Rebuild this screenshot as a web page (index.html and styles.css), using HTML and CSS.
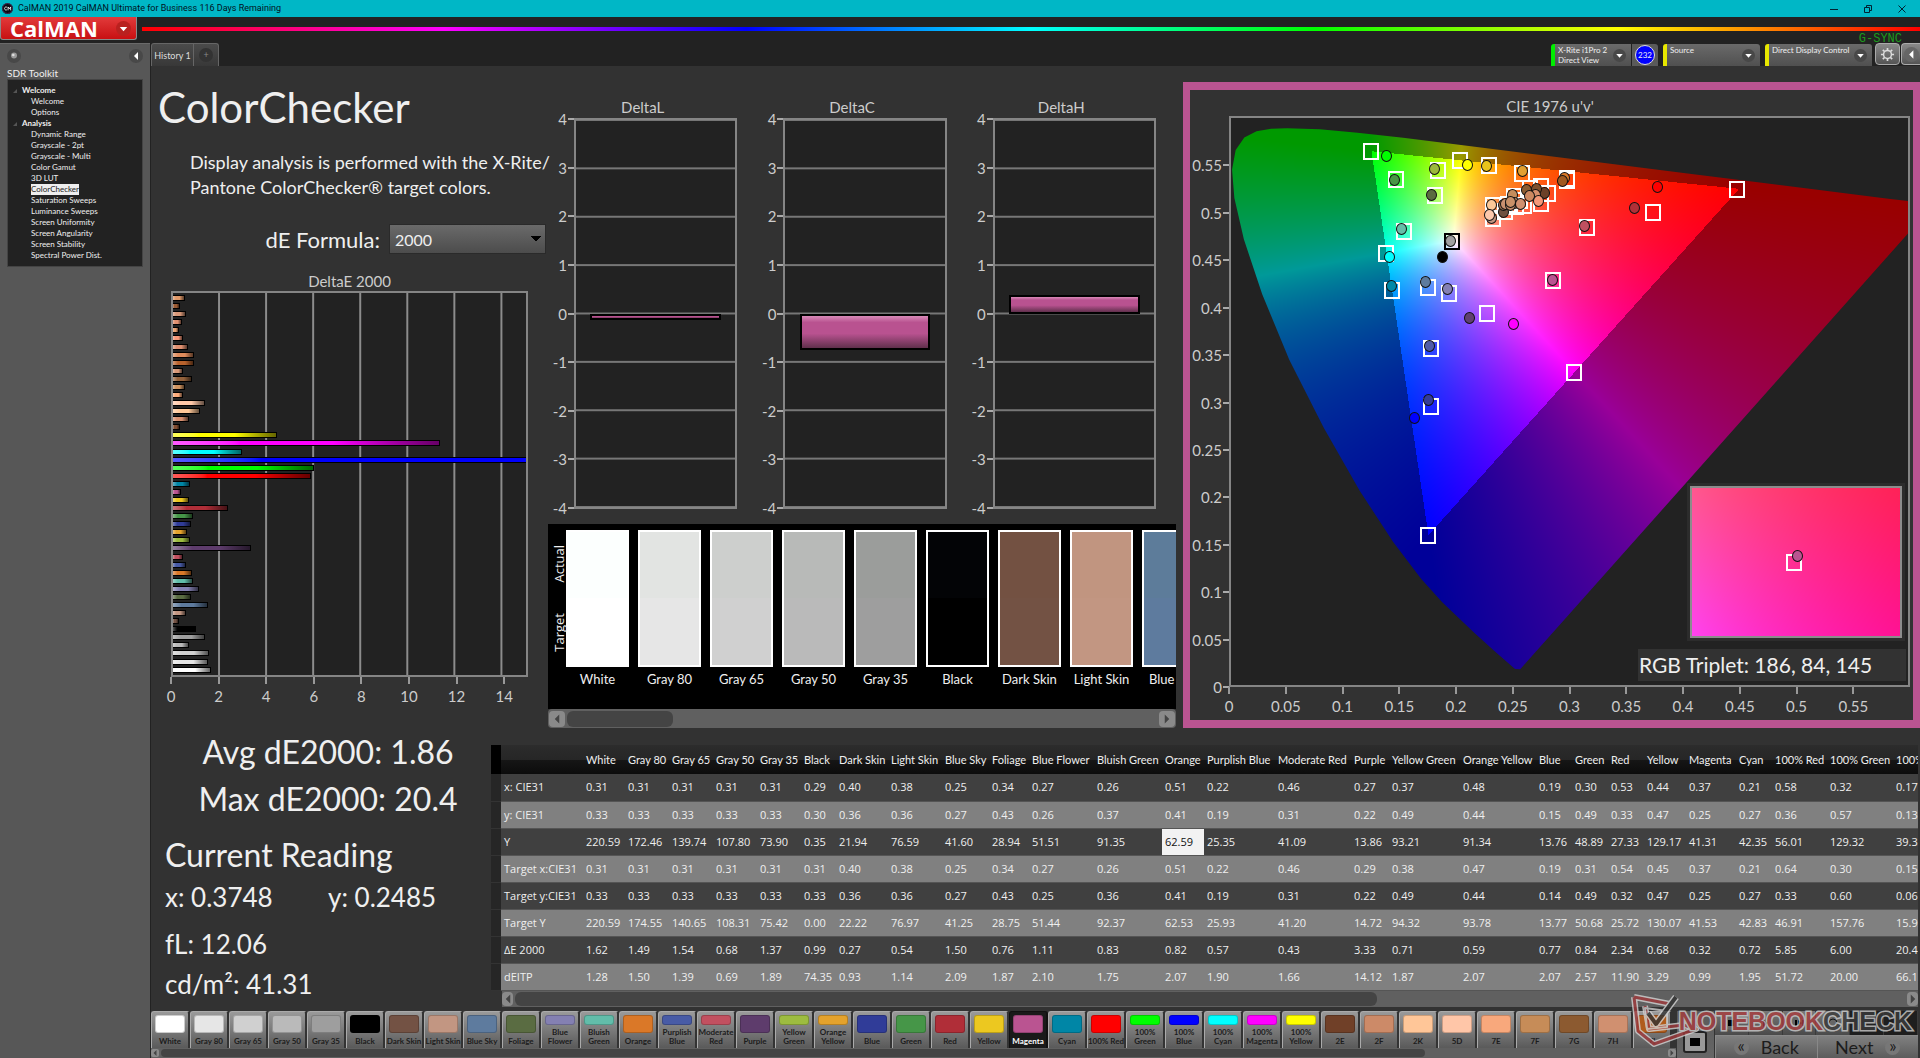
FILE: index.html
```
<!DOCTYPE html>
<html lang="en">
<head>
<meta charset="utf-8">
<title>CalMAN 2019 CalMAN Ultimate for Business</title>
<link rel="stylesheet" href="styles.css">
</head>
<body>
<div class="app">
  <header class="titlebar">
    <svg class="app-icon" viewBox="0 0 12 12"><circle cx="6" cy="6" r="6" fill="#0a0a14"/><circle cx="6" cy="6" r="5.4" fill="none" stroke="#5b3a6e" stroke-width=".8"/><path d="M5.4 4.6a1.7 1.7 0 1 0 0 2.8M6.6 8V4.3L8 6.4l1.4-2.1V8" fill="none" stroke="#fff" stroke-width=".9"/></svg>
    <span class="titlebar-text">CalMAN 2019 CalMAN Ultimate for Business 116 Days Remaining</span>
    <div class="window-buttons">
      <button type="button" aria-label="Minimize"><svg viewBox="0 0 8 8"><path d="M0 4.5h8" stroke="#023" fill="none"/></svg></button>
      <button type="button" aria-label="Restore"><svg viewBox="0 0 8 8"><path d="M.5 2.5h5v5h-5zM2.5 2.5v-2h5v5h-2" stroke="#023" fill="none"/></svg></button>
      <button type="button" aria-label="Close"><svg viewBox="0 0 8 8"><path d="M.5.5l7 7M7.500.5l-7 7" stroke="#023" fill="none"/></svg></button>
    </div>
  </header>

  <div class="brandbar">
    <button type="button" class="brand">CalMAN
      <svg class="brand-arrow" viewBox="0 0 14 14"><circle cx="7" cy="7" r="7" fill="#b9211f"/><path d="M3.500 5.500h7L7 9.500z" fill="#fff"/></svg>
    </button>
    <div class="rainbow"></div>
  </div>

  <div class="body">
    <aside class="sidebar">
      <div class="sidebar-tools">
        <button type="button" class="round" aria-label="Pin"><svg viewBox="0 0 14 14"><circle cx="7" cy="7" r="7" fill="#484848"/><circle cx="7" cy="6.500" r="3" fill="#9a9a9a"/><circle cx="6.300" cy="6" r="1.300" fill="#ddd"/></svg></button>
        <button type="button" class="round" aria-label="Collapse"><svg viewBox="0 0 14 14"><circle cx="7" cy="7" r="7" fill="#484848"/><path d="M9 3v8L5 7z" fill="#fff"/></svg></button>
      </div>
      <h2 class="sidebar-title">SDR Toolkit</h2>
      <nav class="tree">
        <h3>Welcome</h3>
        <a href="#">Welcome</a>
        <a href="#">Options</a>
        <h3>Analysis</h3>
        <a href="#">Dynamic Range</a>
        <a href="#">Grayscale - 2pt</a>
        <a href="#">Grayscale - Multi</a>
        <a href="#">Color Gamut</a>
        <a href="#">3D LUT</a>
        <a href="#" class="current">ColorChecker</a>
        <a href="#">Saturation Sweeps</a>
        <a href="#">Luminance Sweeps</a>
        <a href="#">Screen Uniformity</a>
        <a href="#">Screen Angularity</a>
        <a href="#">Screen Stability</a>
        <a href="#">Spectral Power Dist.</a>
      </nav>
    </aside>

    <main class="main">
      <div class="tabrow">
        <button type="button" class="tab">History 1</button>
        <button type="button" class="tab tab-add" aria-label="Add tab"><span>+</span></button>
        <div class="devices">
          <button type="button" class="device device-ready">
            <span>X-Rite i1Pro 2<br>Direct View</span>
            <svg class="drop" viewBox="0 0 14 14"><circle cx="7" cy="7" r="7" fill="#484848"/><path d="M3.500 5.500h7L7 9.500z" fill="#fff"/></svg>
          </button>
          <div class="meter"><span>232</span></div>
          <button type="button" class="device device-source">
            <span>Source</span>
            <svg class="drop" viewBox="0 0 14 14"><circle cx="7" cy="7" r="7" fill="#484848"/><path d="M3.500 5.500h7L7 9.500z" fill="#fff"/></svg>
          </button>
          <button type="button" class="device device-display">
            <span>Direct Display Control</span>
            <svg class="drop" viewBox="0 0 14 14"><circle cx="7" cy="7" r="7" fill="#484848"/><path d="M3.500 5.500h7L7 9.500z" fill="#fff"/></svg>
          </button>
          <button type="button" class="tool tool-gear" aria-label="Settings"><svg viewBox="0 0 16 16"><circle cx="8" cy="8" r="4.200" fill="none" stroke="#ddd" stroke-width="1.600"/><path d="M8 1v2.500M8 12.500V15M1 8h2.500M12.500 8H15M3 3l1.800 1.800M11.200 11.200L13 13M13 3l-1.800 1.800M4.800 11.200L3 13" stroke="#ddd" stroke-width="1.800"/></svg></button>
          <button type="button" class="tool tool-arrow" aria-label="Expand"><svg viewBox="0 0 16 16"><circle cx="8" cy="8" r="8" fill="#666"/><path d="M10 3.500v9L5.500 8z" fill="#fff"/></svg></button>
          <span class="gsync">G-SYNC</span>
        </div>
      </div>

      <div class="charts">
        <section class="intro">
          <h1>ColorChecker</h1>
          <p>Display analysis is performed with the X-Rite/<br>Pantone ColorChecker® target colors.</p>
          <div class="formula">
            <label for="formula">dE Formula:</label>
            <select id="formula"><option>2000</option></select>
          </div>
          <h2 class="chart-title">DeltaE 2000</h2>
          <div class="de-plot" id="dePlot"></div>
          <div class="xaxis" id="deAxis"></div>
        </section>

        <section class="middle">
          <div class="deltas" id="deltas"></div>
          <div class="swatches">
            <div class="swatch-side"><span>Actual</span><span>Target</span></div>
            <div class="swatch-list" id="swatches"></div>
          </div>
          <div class="scroll scroll-swatches">
            <button type="button" aria-label="Scroll left"><svg viewBox="0 0 8 12"><path d="M7 0v12L1 6z"/></svg></button>
            <div class="track"><div class="thumb"></div></div>
            <button type="button" aria-label="Scroll right"><svg viewBox="0 0 8 12"><path d="M1 0v12l6-6z"/></svg></button>
          </div>
        </section>

        <section class="cie">
          <h2 class="chart-title">CIE 1976 u'v'</h2>
          <div class="cie-grid">
            <div class="yaxis" id="cieY"></div>
            <div class="cie-plot">
              <canvas id="cieCanvas"></canvas>
              <div class="marks" id="cieMarks"></div>
              <div class="inset"><canvas id="insetCanvas"></canvas><div class="marks" id="insetMarks"></div></div>
              <div class="triplet">RGB Triplet: 186, 84, 145</div>
            </div>
            <div></div>
            <div class="xaxis" id="cieX"></div>
          </div>
        </section>
      </div>

      <div class="results">
        <section class="readings">
          <p class="stat">Avg dE2000: 1.86</p>
          <p class="stat">Max dE2000: 20.4</p>
          <h2>Current Reading</h2>
          <div class="pair"><span>x: 0.3748</span><span>y: 0.2485</span></div>
          <p class="value">fL: 12.06</p>
          <p class="value">cd/m²: 41.31</p>
        </section>
        <section class="data">
          <div class="table-wrap"><table id="table"></table></div>
          <div class="scroll scroll-table">
            <button type="button" aria-label="Scroll left"><svg viewBox="0 0 8 12"><path d="M7 0v12L1 6z"/></svg></button>
            <div class="track"><div class="thumb"></div></div>
            <button type="button" aria-label="Scroll right"><svg viewBox="0 0 8 12"><path d="M1 0v12l6-6z"/></svg></button>
          </div>
        </section>
      </div>

      <footer class="footer">
        <div class="patches-wrap">
          <div class="patches" id="patches"></div>
          <div class="scroll scroll-patches">
            <button type="button" aria-label="Scroll left"><svg viewBox="0 0 8 12"><path d="M7 0v12L1 6z"/></svg></button>
            <div class="track"><div class="thumb"></div></div>
            <button type="button" aria-label="Scroll right"><svg viewBox="0 0 8 12"><path d="M1 0v12l6-6z"/></svg></button>
          </div>
        </div>
        <div class="stop"><button type="button" aria-label="Stop"><i></i></button></div>
        <div class="nav">
          <div class="transport">
            <button type="button" aria-label="Stop reading"><svg viewBox="0 0 14 14"><circle cx="7" cy="7" r="7" fill="#666"/><path d="M4 4h6v6H4z"/></svg></button>
            <button type="button" aria-label="Read"><svg viewBox="0 0 14 14"><circle cx="7" cy="7" r="7" fill="#666"/><path d="M5 3v8l5-4z"/></svg></button>
            <button type="button" aria-label="Read series"><svg viewBox="0 0 14 14"><circle cx="7" cy="7" r="7" fill="#666"/><path d="M3 4h2v6H3zM6 4v6l4-3zM10 4h2v6h-2z"/></svg></button>
            <button type="button" aria-label="Read continuous"><svg viewBox="0 0 14 14"><circle cx="7" cy="7" r="7" fill="#666"/><path d="M3 7a4 4 0 1 1 4 4" fill="none" stroke="#111"/></svg></button>
            <button type="button" class="off" aria-label="Previous"><svg viewBox="0 0 14 14"><circle cx="7" cy="7" r="7" fill="#222"/></svg></button>
            <button type="button" class="off" aria-label="Following"><svg viewBox="0 0 14 14"><circle cx="7" cy="7" r="7" fill="#222"/></svg></button>
          </div>
          <div class="steps">
            <button type="button"><i>«</i>Back</button>
            <button type="button">Next<i>»</i></button>
          </div>
        </div>
        <div class="watermark">
          <svg viewBox="0 0 68 54"><g fill="none" stroke-linejoin="round"><path d="M3 3l36 7M3 3l4 34 16 13 42-15-12-4-35 4-4-23" stroke="#d4d4d4" stroke-width="6"/><path d="M3 3l36 7M3 3l4 34 16 13 42-15-12-4-35 4-4-23" stroke="#a03a3c" stroke-width="3"/><path d="M14 14l22 3v16l-20 2z" stroke="#cfcfcf" stroke-width="2"/><path d="M17 19l8 11L45 3" stroke="#d4d4d4" stroke-width="7"/><path d="M17 19l8 11L45 3" stroke="#333" stroke-width="4"/></g></svg>
          <span class="wm-red">NOTEBOOK</span><span class="wm-dark">CHECK</span>
        </div>
      </footer>
    </main>
  </div>
</div>
<script src="app.js"></script>
</body>
</html>
```
FILE: styles.css
```
* { box-sizing: border-box; }
body {
  margin: 0;
  background: #323232;
  color: #efefef;
  font-family: Lato, "Open Sans", sans-serif;
  font-size: 15px;
  overflow: hidden;
}
h1, h2, h3, p { margin: 0; font-weight: 400; }
button { margin: 0; padding: 0; border: 0; background: none; color: inherit; font: inherit; }
a { color: inherit; text-decoration: none; }
svg { display: block; }
.app { display: flex; flex-direction: column; min-height: 100vh; }

/* title bar */
.titlebar {
  display: flex; align-items: center; gap: 5px;
  height: 17px; padding: 0 6px 0 2px;
  background: #00b7c6; color: #012;
  font: 9px/17px Roboto, sans-serif;
}
.app-icon { width: 11px; height: 11px; }
.titlebar-text { flex: 1; }
.window-buttons { display: flex; gap: 26px; padding-right: 8px; }
.window-buttons svg { width: 8px; height: 8px; }

.brandbar { display: flex; align-items: flex-start; height: 26px; background: #222; }
.brand {
  display: flex; align-items: center; justify-content: space-between;
  width: 137px; height: 23px; padding: 0 5px 0 9px;
  border: 1px solid #8a8a8a; border-top: 0; border-radius: 0 0 3px 3px;
  background: linear-gradient(#e23b3b, #c81012);
  color: #fff; font: bold 22px/22px "Open Sans", sans-serif;
}
.brand-arrow { width: 15px; height: 15px; }
.rainbow {
  flex: 1; height: 4px; margin: 10px 0 0 5px;
  background: linear-gradient(90deg, #f00, #f0f 17%, #00f 34%, #0ff 50%, #0f0 66%, #ff0 83%, #f00);
}

.body { flex: 1; display: flex; }

/* sidebar */
.sidebar { width: 150px; padding: 0 7px; background: #575757; border-top: 1px solid #6a6a6a; }
.sidebar-tools { display: flex; justify-content: space-between; height: 23px; align-items: center; }
.round svg { width: 14px; height: 14px; }
.sidebar-title { font-size: 10px; line-height: 12px; }
.tree {
  padding: 5px 0 5px 23px;
  background: #222; border: 1px solid #444;
  font-size: 8px; line-height: 11px;
}
.tree h3 { margin-left: -9px; font-size: 8px; font-weight: 700; line-height: 11px; display: flex; align-items: center; }
.tree h3::before { content: ""; margin: 0 5px 0 -9px; border-left: 4px solid transparent; border-bottom: 4px solid #555; }
.tree a { display: block; width: max-content; }
.tree .current { background: #eee; color: #222; }

/* main area */
.main { flex: 1; min-width: 0; display: flex; flex-direction: column; border-left: 1px solid #222; }
.tabrow { display: flex; height: 23px; background: #222; }
.tab {
  width: 43px; height: 23px; border: 1px solid #666; border-bottom: 0; border-radius: 3px 0 0 0;
  background: linear-gradient(#4b4b4b, #383838); font-size: 9px; color: #ddd; white-space: nowrap;
}
.tab-add { width: 25px; border-left: 0; border-radius: 0 3px 0 0; }
.tab-add span { display: inline-block; width: 14px; height: 14px; border-radius: 50%; background: #333; color: #888; line-height: 13px; }
.devices { position: relative; display: flex; margin-left: auto; }
.device {
  display: flex; align-items: flex-start; justify-content: space-between;
  width: 97px; height: 22px; margin-top: 1px; padding: 1px 5px 0 3px;
  border-left: 4px solid #e8e800; border-radius: 3px 3px 0 0;
  background: linear-gradient(#6a6a6a, #505050);
  font-size: 8px; line-height: 10px; text-align: left; white-space: nowrap;
}
.device-ready { width: 80px; border-left-color: #0e0; border-top-right-radius: 0; }
.device-display { width: 107px; margin-left: 5px; }
.drop { width: 13px; height: 13px; margin-top: 4px; }
.meter {
  display: flex; align-items: center; justify-content: center;
  width: 26px; height: 22px; margin: 1px 5px 0 1px; background: #5a5a5a; border-radius: 0 3px 0 0;
}
.meter span { width: 20px; height: 20px; border: 1px solid #ddd; border-radius: 50%; background: #00f; font-size: 8px; line-height: 18px; text-align: center; }
.tool { width: 25px; height: 22px; margin-left: 3px; border: 1px solid #aaa; border-radius: 4px; background: linear-gradient(#888, #555); }
.tool svg { width: 15px; height: 15px; margin: auto; }
.tool-arrow { width: 19px; margin-left: 1px; border-right: 0; border-radius: 4px 0 0 4px; }
.gsync { position: absolute; right: 18px; top: -10px; height: 10px; color: #1c9a1c; font: 12px/12px "Liberation Mono", monospace; overflow: hidden; }

.charts { display: grid; grid-template-columns: 397fr 635fr 737fr; height: 669px; }
.chart-title { font-size: 15px; line-height: 20px; text-align: center; color: #ccc; }

/* left column */
.intro { min-width: 0; padding: 10px 20px 0 20px; }
.intro h1 { margin-left: -13px; font-size: 42px; line-height: 62px; }
.intro p { margin: 12px 0 0 19px; font-size: 18px; line-height: 25px; white-space: nowrap; }
.formula { display: flex; justify-content: flex-end; align-items: center; gap: 9px; margin: 24px -18px 17px 0; font-size: 22px; }
.formula select {
  appearance: none; width: 157px; height: 30px; padding: 0 5px; border: 1px solid #2a2a2a;
  color: #eee; font: 16px Lato, sans-serif;
  background: linear-gradient(to bottom right, #000 50%, transparent 50%) 146px 11px / 5px 6px no-repeat,
    linear-gradient(to bottom left, #000 50%, transparent 50%) 141px 11px / 5px 6px no-repeat,
    linear-gradient(#6a6a6a, #4c4c4c);
}
.de-plot {
  display: flex; flex-direction: column; height: 386px; padding: 1px 0;
  border: 2px solid #858585;
  background: linear-gradient(90deg, #8c8c8c 2px, transparent 2px) -2px 0 / calc(100% * 2 / 15) 100%, #222;
}
.de-row { flex: 1; display: flex; align-items: center; }
.de-bar { height: 6px; border: 1px solid #000; border-left: 0; }
.de-bar.over { border-right: 0; }

.xaxis { display: flex; color: #ccc; font-size: 15px; line-height: 20px; }
.xaxis span { flex: 2; display: flex; }
.xaxis span.half { flex: 1; }
.xaxis b { display: flex; flex-direction: column; align-items: center; width: 0; font-weight: 400; }
.xaxis b::before { content: ""; width: 2px; height: 7px; margin-bottom: 2px; background: #999; }

.yaxis { display: flex; flex-direction: column; color: #ccc; font-size: 15px; }
.yaxis span { flex: 1; display: flex; align-items: flex-end; justify-content: flex-end; }
.yaxis span.first { flex: 0; }
.yaxis b { display: flex; align-items: center; gap: 1px; height: 0; line-height: 0; font-weight: 400; }
.yaxis b::after { content: ""; width: 6px; height: 2px; background: #aaa; }

/* delta charts */
.middle { min-width: 0; display: flex; flex-direction: column; padding: 31px 7px 0 0; }
.deltas { display: grid; grid-template-columns: repeat(3, 1fr); gap: 20px; padding-right: 20px; }
.delta { display: grid; grid-template-columns: 26px 1fr; }
.delta h2 { grid-column: 1 / 3; margin-bottom: 1px; }
.delta-plot {
  display: flex; flex-direction: column; height: 391px; border: 2px solid #858585;
  background: linear-gradient(#777 2px, transparent 2px) 0 -1px / 100% 12.5%, #222;
}
.delta-half { flex: 1; display: flex; flex-direction: column; align-items: center; }
.delta-half.up { justify-content: flex-end; }
.delta-bar { width: 82%; border: 2px solid #000; background: linear-gradient(#d88ab8, #b95290 20%, #b95290 55%, #60304c); }
.delta .yaxis { margin: 1px 0; }

.swatches { display: flex; height: 185px; margin-top: 15px; padding: 6px 0 0 3px; background: #000; }
.swatch-side { width: 15px; height: 137px; display: flex; flex-direction: column; justify-content: space-around; align-items: center; }
.swatch-side span { writing-mode: vertical-rl; transform: rotate(180deg); font: 13px/14px "Open Sans", sans-serif; }
.swatch-list { flex: 1; display: flex; gap: 9px; overflow: hidden; }
.swatch { flex: none; width: 63px; font-size: 13px; line-height: 24px; white-space: nowrap; text-align: center; }
.swatch div { height: 137px; border: 2px solid #fff; }

/* scrollbars */
.scroll { display: flex; align-items: center; gap: 2px; background: #606060; }
.scroll button { display: flex; align-items: center; justify-content: center; width: 16px; height: 16px; border-radius: 4px; background: #8a8a8a; }
.scroll svg { width: 6px; height: 12px; fill: #444; }
.scroll .track { flex: 1; height: 100%; display: flex; align-items: center; }
.scroll .thumb { width: 18%; height: 16px; border-radius: 6px; background: #444; }
.scroll-swatches { height: 19px; padding: 0 1px; border-radius: 4px; }
.scroll-table { height: 16px; margin-left: 11px; }
.scroll-table button, .scroll-table .thumb { height: 14px; }
.scroll-table button { width: 11px; }
.scroll-table .thumb { width: 62%; }
.scroll-patches { height: 10px; }
.scroll-patches button, .scroll-patches .thumb { height: 8px; }
.scroll-patches button { width: 8px; border-radius: 2px; }
.scroll-patches svg { height: 6px; }
.scroll-patches .thumb { width: 84%; }

/* chromaticity chart */
.cie {
  min-width: 0; display: flex; flex-direction: column;
  margin: 16px 0 7px; padding: 6px 3px 0 0; border: 8px solid #ba5491; border-width: 8px 7px;
}
.cie-grid { display: grid; grid-template-columns: 39px 1fr; flex: 1; grid-template-rows: 571px auto; }
.cie-plot { position: relative; border: 2px solid #858585; background: #222; }
.cie-plot canvas { display: block; width: 100%; height: 100%; }
.marks { position: absolute; inset: 0; }
.marks i { position: absolute; width: 11px; height: 12px; margin: -6px 0 0 -6px; border: 1px solid #111; border-radius: 50%; }
.marks i.target { width: 16px; height: 17px; margin: -8px 0 0 -8px; border: 2px solid #fff; border-radius: 0; }
.marks i.target.dark { border-color: #000; }
.inset { position: absolute; right: 6px; bottom: 47px; width: 212px; height: 152px; border: 2px solid #8c8c8c; outline: 3px solid #2c2c2c; }
.triplet { position: absolute; right: 2px; bottom: 4px; width: 268px; padding-left: 1px; background: #323232; font-size: 21px; line-height: 32px; white-space: nowrap; }
.cie .yaxis { margin: 2px 0 0; }

/* readings and table */
.results { flex: 1; display: flex; height: 276px; }
.readings { width: 340px; padding: 0 0 0 14px; }
.stat { text-align: center; font-size: 32px; line-height: 47px; }
.stat:first-child { margin-top: -7px; }
.readings h2 { margin-top: 9px; font-size: 32px; line-height: 47px; }
.pair { display: grid; grid-template-columns: 1fr 1fr; font-size: 26px; line-height: 38px; }
.value { font-size: 26px; line-height: 40px; }
.pair + .value { margin-top: 8px; }
.data { flex: 1; min-width: 0; padding: 10px 2px 0 0; }
.table-wrap { overflow: hidden; }
table { width: 1460px; table-layout: fixed; border-collapse: collapse; font: 11px/26px "Open Sans", sans-serif; white-space: nowrap; }
th, td { padding: 0 0 0 3px; text-align: left; font-weight: 400; overflow: visible; }
thead { font-family: Lato, sans-serif; }
thead tr { height: 29px; background: linear-gradient(#2c2c2c, #262626 50%, #161616 50%, #0c0c0c); }
thead th:first-child { background: #000; }
tbody tr { height: 27px; background: #404040; border-bottom: 1px solid #555; }
tbody tr:nth-child(even) { background: #808080; }
tbody .grip { background: #262626; border-bottom: 1px solid #333; }
tbody .picked { background: #f2f2f2; color: #111; }

/* footer */
.footer { position: relative; display: flex; height: 47px; }
.patches-wrap { flex: 1; min-width: 0; }
.patches { display: flex; height: 37px; padding-right: 4px; background: #333; }
.patch {
  flex: 1; min-width: 0; display: flex; flex-direction: column; align-items: center; justify-content: space-between;
  padding: 3px 0 2px; border: 1px solid #aaa; border-width: 1px 0 0 1px; border-right: 2px solid #333; border-radius: 3px 3px 0 0;
  background: linear-gradient(#9a9a9a, #5a5a5a);
  color: #1c1c1c; font-size: 8px; font-weight: 700; line-height: 9px; white-space: nowrap;
}
.patch i { width: 30px; height: 18px; border: 1px solid #0003; border-radius: 3px; }
.patch.two i { height: 10px; }
.patch.active { background: #1a1a1a; border-color: #111; color: #fff; }
.stop { display: flex; align-items: flex-end; width: 38px; padding: 0 6px 5px; background: linear-gradient(#5a5a5a, #666); border-left: 1px solid #333; }
.stop button { width: 24px; height: 22px; padding: 5px; border: 2px solid #222; border-radius: 3px; background: #999; }
.stop i { display: block; height: 100%; background: #000; }
.nav { width: 206px; padding-right: 2px; border-left: 1px solid #333; }
.transport { display: grid; grid-template-columns: repeat(6, 1fr); height: 24px; }
.transport button { border-right: 1px solid #3a3a3a; background: linear-gradient(#777, #4a4a4a); }
.transport .off { background: #1e1e1e; }
.transport svg { width: 14px; height: 14px; margin: auto; }
.steps { display: grid; grid-template-columns: 1fr 1fr; height: 23px; }
.steps button { display: flex; align-items: center; justify-content: center; gap: 12px; border: 1px solid #888; border-width: 1px 0 0 1px; background: linear-gradient(#808080, #5c5c5c); color: #1c1c1c; font-size: 18px; line-height: 20px; }
.steps i { width: 15px; height: 15px; border-radius: 50%; background: #777; font-style: normal; font-size: 17px; line-height: 12px; text-align: center; }
.watermark { position: absolute; right: 8px; bottom: 10px; display: flex; align-items: center; opacity: .8; font: bold 25px/30px "Liberation Sans", sans-serif; -webkit-text-stroke: 3px #ccc; paint-order: stroke fill; pointer-events: none; }
.watermark svg { width: 68px; height: 54px; margin-right: -20px; }
.wm-red { color: #a83c3e; }
.wm-dark { color: #3a3a3a; }
```
FILE: app.js
```
const byId = (id) => document.getElementById(id);

// name, column width, patch colour, then x, y, Y, target x, target y, target Y, dE 2000, dE ITP
const patches = [
  ["White", 42, "#ffffff", ".31 .33 220.59 .31 .33 220.59 1.62 1.28"],
  ["Gray 80", 44, "#e6e6e6", ".31 .33 172.46 .31 .33 174.55 1.49 1.50"],
  ["Gray 65", 44, "#d0d0d0", ".31 .33 139.74 .31 .33 140.65 1.54 1.39"],
  ["Gray 50", 44, "#bababa", ".31 .33 107.80 .31 .33 108.31 0.68 0.69"],
  ["Gray 35", 44, "#9e9e9e", ".31 .33 73.90 .31 .33 75.42 1.37 1.89"],
  ["Black", 35, "#000000", ".29 .30 0.35 .31 .33 0.00 0.99 74.35"],
  ["Dark Skin", 52, "#735244", ".40 .36 21.94 .40 .36 22.22 0.27 0.93"],
  ["Light Skin", 54, "#c29682", ".38 .36 76.59 .38 .36 76.97 0.54 1.14"],
  ["Blue Sky", 47, "#5e7b9e", ".25 .27 41.60 .25 .27 41.25 1.50 2.09"],
  ["Foliage", 40, "#5a6c42", ".34 .43 28.94 .34 .43 28.75 0.76 1.87"],
  ["Blue Flower", 65, "#8480b2", ".27 .26 51.51 .27 .25 51.44 1.11 2.10"],
  ["Bluish Green", 68, "#62bdaa", ".26 .37 91.35 .26 .36 92.37 0.83 1.75"],
  ["Orange", 42, "#da7828", ".51 .41 62.59 .51 .41 62.53 0.82 2.07"],
  ["Purplish Blue", 71, "#485ba6", ".22 .19 25.35 .22 .19 25.93 0.57 1.90"],
  ["Moderate Red", 76, "#c25060", ".46 .31 41.09 .46 .31 41.20 0.43 1.66"],
  ["Purple", 38, "#5e3c6c", ".27 .22 13.86 .29 .22 14.72 3.33 14.12"],
  ["Yellow Green", 71, "#9dbc40", ".37 .49 93.21 .38 .49 94.32 0.71 1.87"],
  ["Orange Yellow", 76, "#e4a22c", ".48 .44 91.34 .47 .44 93.78 0.59 2.07"],
  ["Blue", 36, "#303c98", ".19 .15 13.76 .19 .14 13.77 0.77 2.07"],
  ["Green", 36, "#469648", ".30 .49 48.89 .31 .49 50.68 0.84 2.57"],
  ["Red", 36, "#b02e38", ".53 .33 27.33 .54 .32 25.72 2.34 11.90"],
  ["Yellow", 42, "#ecc820", ".44 .47 129.17 .45 .47 130.07 0.68 3.29"],
  ["Magenta", 50, "#ba5491", ".37 .25 41.31 .37 .25 41.53 0.32 0.99"],
  ["Cyan", 36, "#0086a6", ".21 .27 42.35 .21 .27 42.83 0.72 1.95"],
  ["100% Red", 55, "#ff0000", ".58 .36 56.01 .64 .33 46.91 5.85 51.72"],
  ["100% Green", 66, "#00ff00", ".32 .57 129.32 .30 .60 157.76 6.00 20.00"],
  ["100% Blue", 60, "#0000ff", ".17 .13 39.33 .15 .06 15.92 20.4 66.13"],
];
const extraPatches = [
  ["100% Cyan", "#00ffff"], ["100% Magenta", "#ff00ff"], ["100% Yellow", "#ffff00"],
  ["2E", "#704028"], ["2F", "#cc8a68"], ["2K", "#ffc698"], ["5D", "#ffc6a8"], ["7E", "#f8a87c"],
  ["7F", "#c68c58"], ["7G", "#8c5a30"], ["7H", "#d09070"], ["7I", "#b05c1c"],
];

// DeltaE 2000 bars, top to bottom
const bars = [
  [0.5, "#e09868"], [0.3, "#9c5c34"], [0.55, "#d89878"], [0.38, "#e09070"], [0.26, "#e8a070"], [0.43, "#f89878"],
  [0.63, "#e09070"], [0.9, "#e08c5c"], [0.9, "#b8622c"], [0.43, "#d89878"], [0.82, "#94623c"], [0.5, "#d09460"],
  [0.43, "#fcac7c"], [1.37, "#ffc8a8"], [1.15, "#ffc898"], [0.68, "#d89070"], [0.3, "#804c30"],
  [4.4, "#ffff00"], [11.35, "#ff00ff"], [2.95, "#00ffff"],
];
for (let n = 26; n >= 0; n--) bars.push([parseFloat(patches[n][3].split(" ")[6]), patches[n][2]]);
byId("dePlot").innerHTML = bars.map(([v, c]) =>
  `<div class="de-row"><div class="de-bar${v > 15 ? " over" : ""}" style="width:${Math.min(v, 15) / 15 * 100}%;background:linear-gradient(90deg,color-mix(in srgb,${c} 65%,#fff),${c} 25%,${c} ${v > 15 ? 100 : 60}%,color-mix(in srgb,${c} 40%,#000))"></div></div>`).join("");

const xAxis = (labels, lastHalf) => labels.map((t, n) =>
  `<span class="${lastHalf && n === labels.length - 1 ? "half" : ""}"><b>${t}</b></span>`).join("");
byId("deAxis").innerHTML = xAxis([0, 2, 4, 6, 8, 10, 12, 14], true);
byId("cieX").innerHTML = xAxis(["0", "0.05", "0.1", "0.15", "0.2", "0.25", "0.3", "0.35", "0.4", "0.45", "0.5", "0.55"], false);
byId("cieY").innerHTML = ["0.55", "0.5", "0.45", "0.4", "0.35", "0.3", "0.25", "0.2", "0.15", "0.1", "0.05", "0"]
  .map((t) => `<span><b>${t}</b></span>`).join("");

const deltaAxis = [4, 3, 2, 1, 0, -1, -2, -3, -4].map((t, n) => `<span class="${n ? "" : "first"}"><b>${t}</b></span>`).join("");
byId("deltas").innerHTML = [["DeltaL", -0.14], ["DeltaC", -0.75], ["DeltaH", 0.38]].map(([name, v]) => {
  const bar = `<div class="delta-bar" style="height:${Math.abs(v) * 25}%"></div>`;
  return `<div class="delta"><h2 class="chart-title">${name}</h2><div class="yaxis">${deltaAxis}</div>
    <div class="delta-plot"><div class="delta-half up">${v > 0 ? bar : ""}</div><div class="delta-half">${v < 0 ? bar : ""}</div></div></div>`;
}).join("");

const actual = ["#fcfffe", "#e2e4e2", "#cdcfcd", "#b8bab8", "#9b9d9b", "#030406", "#735142", "#c19580", "#5d7c9a"];
byId("swatches").innerHTML = actual.map((c, n) =>
  `<div class="swatch"><div style="background:linear-gradient(${c} 50%,${patches[n][2]} 50%)"></div>${patches[n][0]}</div>`).join("");

// results table
const rowNames = ["x: CIE31", "y: CIE31", "Y", "Target x:CIE31", "Target y:CIE31", "Target Y", "ΔE 2000", "dEITP"];
const cols = [10, 82, ...patches.map((p) => p[1])].map((w) => `<col style="width:${w}px">`).join("");
const rows = rowNames.map((name, r) =>
  `<tr><td class="grip"></td><th scope="row">${name}</th>${patches.map((p) => {
    const v = p[3].split(" ")[r].replace(/^\./, "0.");
    return `<td class="${r === 2 && p[0] === "Orange" ? "picked" : ""}">${v}</td>`;
  }).join("")}</tr>`).join("");
byId("table").innerHTML = `<colgroup>${cols}</colgroup><thead><tr><th></th><th></th>${patches.map((p) => `<th scope="col">${p[0]}</th>`).join("")}</tr></thead><tbody>${rows}</tbody>`;

// patch buttons
byId("patches").innerHTML = [...patches.map((p) => [p[0], p[2]]), ...extraPatches].map(([name, c]) => {
  const two = /^(Blue Fl|Bluish|Purplish|Moderate|Yellow G|Orange Y|100% [^R])/.test(name);
  return `<button type="button" class="patch${two ? " two" : ""}${name === "Magenta" ? " active" : ""}"><i style="background:${c}"></i><span>${two ? name.replace(" ", "<br>") : name}</span></button>`;
}).join("");

// chromaticity diagram
const range = { u0: 0.0005, u1: 0.6005, v0: 0, v1: 0.5975 };
const locus = [[.1741, .005], [.1714, .0051], [.1644, .0109], [.1566, .0177], [.144, .0297], [.1355, .0399], [.1241, .0578],
  [.1096, .0868], [.0913, .1327], [.0687, .2007], [.0454, .295], [.0235, .4127], [.0082, .5384], [.0039, .6548],
  [.0139, .7502], [.0389, .812], [.0743, .8338], [.1142, .8262], [.1547, .8059], [.2296, .7543], [.3016, .6923],
  [.3731, .6245], [.4441, .5547], [.5125, .4866], [.5752, .4242], [.627, .3725], [.6658, .334], [.6915, .3083],
  [.719, .2809], [.7347, .2653]];

function paint(canvas, { u0, u1, v0, v1 }, clip) {
  const w = canvas.width = canvas.clientWidth;
  const h = canvas.height = canvas.clientHeight;
  const ctx = canvas.getContext("2d");
  const img = ctx.createImageData(w, h);
  for (let j = 0; j < h; j++) {
    for (let i = 0; i < w; i++) {
      const u = u0 + (u1 - u0) * (i + .5) / w;
      const v = v1 - (v1 - v0) * (j + .5) / h;
      const X = 9 * u / (4 * v);
      const Z = (12 - 3 * u - 20 * v) / (4 * v);
      const rgb = [3.2406 * X - 1.5372 - .4986 * Z, -.9689 * X + 1.8758 + .0415 * Z, .0557 * X - .204 + 1.057 * Z];
      const out = Math.min(...rgb) < 0;
      const max = Math.max(...rgb);
      const k = (j * w + i) * 4;
      for (let n = 0; n < 3; n++) img.data[k + n] = 255 * Math.max(0, rgb[n] / max) * (out ? .6 : 1);
      img.data[k + 3] = 255;
    }
  }
  ctx.putImageData(img, 0, 0);
  if (!clip) return;
  ctx.globalCompositeOperation = "destination-in";
  ctx.beginPath();
  for (const [x, y] of locus) {
    const d = -2 * x + 12 * y + 3;
    ctx.lineTo((4 * x / d - u0) / (u1 - u0) * w, (v1 - 9 * y / d) / (v1 - v0) * h);
  }
  ctx.fill();
}
paint(byId("cieCanvas"), range, true);
paint(byId("insetCanvas"), { u0: .257, u1: .317, v0: .4, v1: .454 }, false);

const targets = [[.1243, .5627], [.2032, .5529], [.229, .5476], [.184, .543], [.1469, .5328], [.181, .516], [.2582, .5395],
  [.2983, .5342], [.2985, .5318], [.4493, .5226], [.3742, .498], [.3162, .4826], [.1535, .478], [.1381, .4548], [.1431, .4165],
  [.1752, .4193], [.194, .4133], [.2278, .3918], [.2862, .4267], [.1777, .3556], [.3041, .33], [.1777, .2943], [.1752, .1582],
  [.2818, .5183], [.275, .526], [.2653, .5239], [.275, .5084], [.2517, .5158], [.2325, .5053], [.2325, .4919], [.2434, .5],
  [.26, .5056], [.2564, .5109], [.2535, .5049], [.2464, .5074]];
const measured = [[.1389, .5578, "#00ff00"], [.2107, .548, "#ffff00"], [.2274, .5466, "#e8c41c"], [.1815, .5434, "#9cb83c"],
  [.146, .5325, "#489646"], [.179, .516, "#5a6c40"], [.2591, .5413, "#e2a030"], [.2962, .5346, "#d87828"], [.295, .5311, "#a05a20"],
  [.3792, .5244, "#ff0000"], [.3588, .5026, "#b03038"], [.3141, .4833, "#c05060"], [.1523, .4801, "#66bda8"], [.1418, .4513, "#00ffff"],
  [.1957, .4678, "#a0a0a0"], [.1881, .4513, "#000000"], [.1431, .42, "#0088a8"], [.1735, .4252, "#5e7b9e"], [.1927, .4168, "#8480b4"],
  [.2119, .3869, "#604070"], [.2516, .3802, "#ff00ff"], [.2862, .427, "#ba5491"], [.1765, .357, "#505ca8"], [.176, .3006, "#343c98"],
  [.1635, .281, "#0000ff"], [.2785, .5186, "#6c4028"], [.2717, .5232, "#80502c"], [.2632, .5218, "#8c5c30"], [.2712, .5162, "#d8906c"],
  [.2658, .5151, "#cc8860"], [.2732, .5105, "#f49878"], [.2505, .5165, "#c48c5c"], [.2322, .5053, "#fcc898"], [.2314, .4919, "#c09480"],
  [.2299, .4954, "#fcc8ac"], [.2426, .4982, "#705040"], [.2426, .5056, "#a07050"], [.2443, .5067, "#c89070"], [.252, .5084, "#c08868"],
  [.2488, .5056, "#c08868"], [.249, .5088, "#c89068"], [.2579, .507, "#d09070"]];
const place = (u, v) => `left:${(u - range.u0) / (range.u1 - range.u0) * 100}%;top:${(1 - v / range.v1) * 100}%`;
byId("cieMarks").innerHTML =
  targets.map(([u, v]) => `<i class="target" style="${place(u, v)}"></i>`).join("") +
  `<i class="target dark" style="${place(.1961, .4678)}"></i>` +
  measured.map(([u, v, c]) => `<i style="${place(u, v)};background:${c}"></i>`).join("");
byId("insetMarks").innerHTML = '<i class="target" style="left:49%;top:50%"></i><i style="left:51%;top:46%;background:#ba5491"></i>';
```
